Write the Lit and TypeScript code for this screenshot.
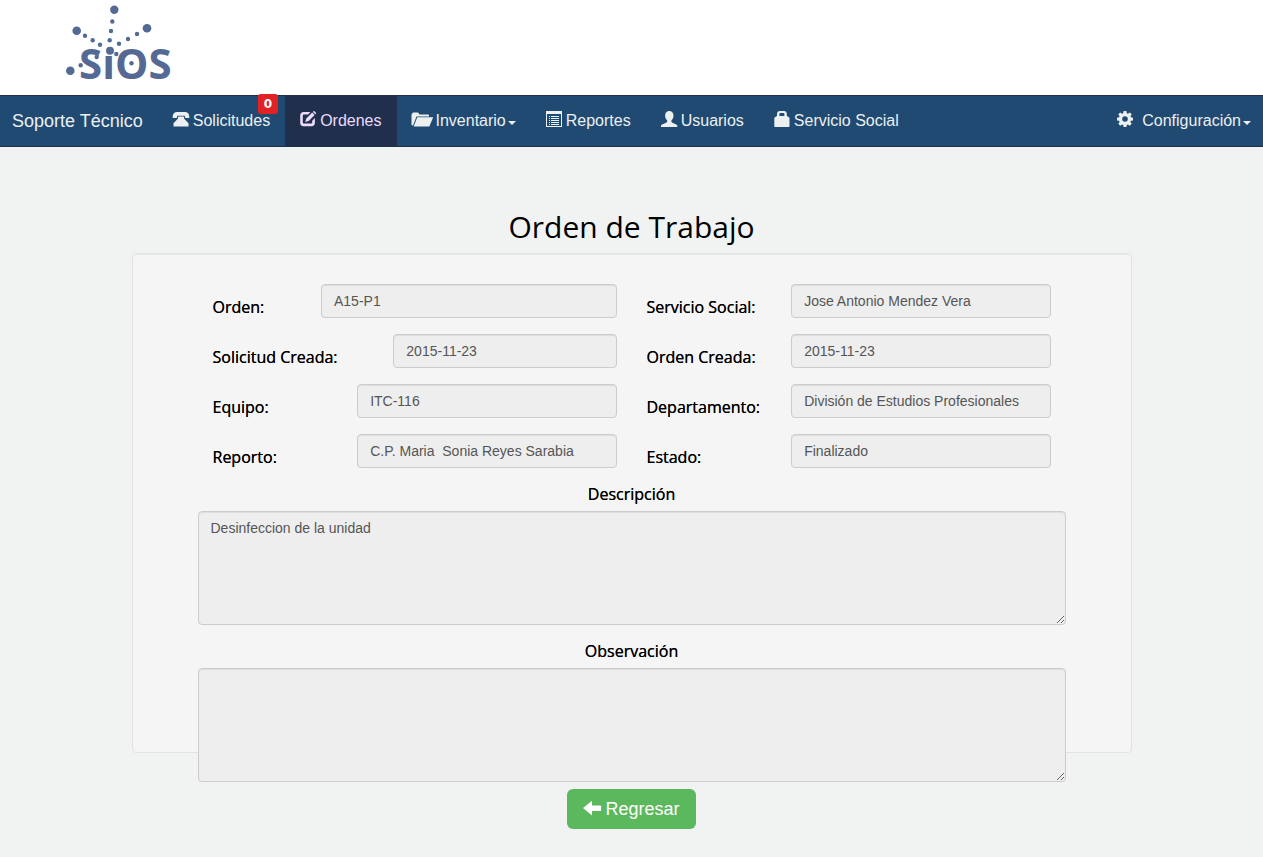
import { LitElement, html, svg, css, nothing } from "lit";
import { customElement, state } from "lit/decorators.js";

const icons: Record<string, { w: number; body: unknown }> = {
  phone: {
    w: 16,
    body: svg`<path d="M4 1h8c2.500 0 4.300 2 4.300 4.300V7h-4.100L11.700 4.700H4.300L3.800 7H-.3V5.300C-.3 3 1.500 1 4 1z"/><path d="M5.300 5.600h5.400l.5 2.200 4.300 4.400V15.500H.5V12.200l4.300-4.400z"/>`,
  },
  edit: {
    w: 16,
    body: svg`<path fill-rule="evenodd" d="M3.600 1H10.500L8 3.600H4c-.700 0-1.200.500-1.200 1.200v6.600c0 .700.500 1.200 1.200 1.200h7c.700 0 1.200-.500 1.200-1.200V9.700l2.700-2.700v5c0 1.900-1.300 3.200-3.200 3.200H3.400C1.500 15.200.2 13.900.2 12V4.200C.2 2.300 1.600 1 3.600 1z"/><path d="M12.200 1.600 14.600 4 8.700 9.900 5.200 11.100 6.300 7.500z"/><path d="M12.900.9l.6-.6c.3-.3.6-.3.900 0l1.500 1.500c.3.300.3.600 0 .900l-.6.600z"/>`,
  },
  folder: {
    w: 20,
    body: svg`<path d="M-.5 14V3.500L1 1.500h5L7.500 3.500H16c.600 0 1 .400 1 1V5.500H4.500L1 14.500z"/><path d="M5.300 6.300H21.200L17.300 15.500H1.600z"/>`,
  },
  list: {
    w: 16,
    body: svg`<path fill-rule="evenodd" d="M0 0h16v16H0zM1 3v12h14V3z"/><path d="M3 5h1v1H3zM5 5h8v1H5zM3 7h1v1H3zM5 7h8v1H5zM3 9h1v1H3zM5 9h8v1H5zM3 11h1v1H3zM5 11h8v1H5zM3 13h1v1H3zM5 13h8v1H5z"/>`,
  },
  user: {
    w: 16,
    body: svg`<path d="M8.300 0c2.400 0 4.200 1.700 4.200 4.400 0 2-.900 4-2.100 5v1.200c.100.600.400.800 1 1.100l3.800 1.700c.700.300 1.100.700 1.100 1.400V16H0v-1.200c0-.700.400-1.100 1.100-1.400l4-1.700c.600-.3 1-.5 1.100-1.100V9.400c-1.200-1-2.100-3-2.100-5C4.100 1.700 5.900 0 8.300 0z"/>`,
  },
  lock: {
    w: 16,
    body: svg`<path fill-rule="evenodd" d="M6 0h4c1.700 0 2.800 1.300 2.800 2.900V5l2.200 1.300c.3.200.5.500.5.900V15c0 .600-.4 1-1 1H1.300c-.6 0-1-.4-1-1V7.200c0-.4.200-.7.500-.9L3 5V2.900C3 1.300 4.300 0 6 0zM6.200 2.100c-.5 0-.8.300-.8.800V5h5V2.900c0-.5-.3-.8-.8-.8z"/>`,
  },
  cog: {
    w: 16,
    body: svg`<path fill-rule="evenodd" d="M6.600 0h2.800l.4 2.200 1.100.5L12.800 1.400l1.900 1.900-1.200 1.900.4 1.100 2.100.4v2.700l-2.100.4-.5 1.100 1.300 1.900-1.900 1.900-1.900-1.300-1.100.5L9.400 16H6.600l-.4-2.100-1.100-.5-1.900 1.300-1.900-1.900 1.300-1.900-.5-1.100L0 9.400V6.700l2.100-.4.5-1.100L1.300 3.300l1.900-1.900L5.100 2.700l1.100-.5zM8 5.200a2.800 2.800 0 1 0 0 5.600 2.800 2.800 0 0 0 0-5.600z"/>`,
  },
  back: {
    w: 18,
    body: svg`<path d="M0 7l9-7.200v4.700H17.600c.3 0 .5.200.5.500v4.500c0 .3-.2.500-.5.500H9v4.500z"/>`,
  },
};

const icon = (name: string) => {
  const { w, body } = icons[name];
  return html`<svg class="icon" width=${w} height="16" viewBox="0 0 ${w} 16" aria-hidden="true">${body}</svg>`;
};

const logoDots = [
  [114.3, 9.8, 4.2], [112.3, 21.5, 2.2], [111, 31, 2.2], [109.7, 40.3, 2.2], [110, 50.7, 4],
  [76.7, 30.7, 4.3], [85, 35.7, 2.2], [92.7, 40.3, 2.2], [100, 44.7, 2.2],
  [147, 28.3, 4.3], [137, 34, 2.2], [128, 39, 2.2], [119, 43.7, 2.2], [116.3, 54, 2.2],
  [96.7, 57, 2.2], [80.7, 65.3, 2.2], [70.3, 70.7, 4.3], [131.5, 63.3, 2.2],
];

interface NavItem {
  label: string;
  icon: string;
  badge?: string;
  menu?: boolean;
}

interface Field {
  id: string;
  label: string;
  value: string;
  size: "narrow" | "medium" | "wide";
}

@customElement("app-nav")
export class AppNav extends LitElement {
  @state() private active = "Ordenes";

  private items: NavItem[] = [
    { label: "Solicitudes", icon: "phone", badge: "0" },
    { label: "Ordenes", icon: "edit" },
    { label: "Inventario", icon: "folder", menu: true },
    { label: "Reportes", icon: "list" },
    { label: "Usuarios", icon: "user" },
    { label: "Servicio Social", icon: "lock" },
  ];

  static styles = css`
    :host {
      display: block;
      font: 16px/20px "Liberation Sans", Arial, sans-serif;
    }
    .bar {
      display: flex;
      align-items: stretch;
      background: #204a71;
      border-top: 1px solid #202f4c;
      border-bottom: 1px solid #202f4c;
      padding-left: 12px;
    }
    .brand {
      padding: 15px 15px 15px 0;
      font-size: 18px;
    }
    .items {
      display: flex;
      flex: 1;
      margin: 0;
      padding: 0;
      list-style: none;
    }
    a {
      color: #ecf0f1;
      text-decoration: none;
      white-space: nowrap;
    }
    .link {
      position: relative;
      display: flex;
      align-items: flex-start;
      gap: 4px;
      padding: 15px;
    }
    .active {
      background: #202f4c;
      color: #ecdbff;
    }
    .settings {
      gap: 9px;
      padding-right: 12px;
    }
    .icon {
      fill: currentColor;
      overflow: visible;
    }
    .text {
      display: flex;
      align-items: center;
      gap: 2px;
    }
    .caret {
      margin-top: 4px;
      border: 4px solid transparent;
      border-top-color: currentColor;
      border-bottom: 0;
    }
    .badge {
      position: absolute;
      top: -2px;
      right: 7px;
      padding: 0 6px;
      border-radius: 3px;
      background: #e02222;
      color: #fff;
      font: bold 12px/20px "DejaVu Sans", sans-serif;
    }
  `;

  render() {
    return html`<nav class="bar">
      <a class="brand" href="#">Soporte Técnico</a>
      <ul class="items">
        ${this.items.map(
          (item) => html`<li>
            <a
              class="link ${item.label === this.active ? "active" : ""}"
              href="#"
              @click=${() => (this.active = item.label)}
              >${icon(item.icon)}<span class="text"
                >${item.label}${item.menu ? html`<span class="caret"></span>` : nothing}</span
              >${item.badge ? html`<span class="badge">${item.badge}</span>` : nothing}</a
            >
          </li>`
        )}
      </ul>
      <a class="link settings" href="#"
        >${icon("cog")}<span class="text">Configuración<span class="caret"></span></span
      ></a>
    </nav>`;
  }
}

@customElement("app-root")
export class AppRoot extends LitElement {
  private fields: Field[] = [
    { id: "orden", label: "Orden:", value: "A15-P1", size: "wide" },
    { id: "servicio", label: "Servicio Social:", value: "Jose Antonio Mendez Vera", size: "medium" },
    { id: "solicitud", label: "Solicitud Creada:", value: "2015-11-23", size: "narrow" },
    { id: "creada", label: "Orden Creada:", value: "2015-11-23", size: "medium" },
    { id: "equipo", label: "Equipo:", value: "ITC-116", size: "medium" },
    { id: "departamento", label: "Departamento:", value: "División de Estudios Profesionales", size: "medium" },
    { id: "reporto", label: "Reporto:", value: "C.P. Maria  Sonia Reyes Sarabia", size: "medium" },
    { id: "estado", label: "Estado:", value: "Finalizado", size: "medium" },
  ];

  static styles = css`
    :host {
      display: block;
      min-height: 100vh;
      background: #f0f3f2;
      color: #000;
      font: 14px/20px "Liberation Sans", Arial, sans-serif;
    }
    * {
      box-sizing: border-box;
    }
    .header {
      height: 95px;
      padding-left: 60px;
      background: #fff;
    }
    .logo {
      display: block;
      fill: #546a94;
    }
    .logo-text {
      font: 700 42px "Open Sans", sans-serif;
    }
    .main {
      max-width: 1000px;
      margin: 0 auto;
      padding-top: 60px;
    }
    .title {
      margin: 0;
      font: 400 30px/40px "Open Sans", sans-serif;
      text-align: center;
    }
    .well {
      margin-top: 6px;
      padding: 30px 65px 0;
      border: 1px solid #e3e3e3;
      border-radius: 4px;
      background: #f5f5f5;
      box-shadow: inset 0 1px 1px rgba(0, 0, 0, 0.05);
    }
    .fields {
      display: grid;
      grid-template-columns: 1fr 1fr;
      row-gap: 16px;
    }
    .field {
      display: grid;
    }
    .field.wide {
      grid-template-columns: 3fr 9fr;
    }
    .field.medium {
      grid-template-columns: 4fr 8fr;
    }
    .field.narrow {
      grid-template-columns: 5fr 7fr;
    }
    .label,
    .area-label {
      font: 500 16px/22px "Open Sans", sans-serif;
      text-shadow: 0 0 #000;
      white-space: nowrap;
    }
    .label {
      padding: 12px 0 0 15px;
    }
    .control {
      display: block;
      width: 100%;
      min-width: 0;
      margin: 0;
      padding: 6px 12px;
      border: 1px solid #ccc;
      border-radius: 4px;
      background: #eee;
      color: #555;
      font: 14px/20px "Liberation Sans", Arial, sans-serif;
      box-shadow: inset 0 1px 1px rgba(0, 0, 0, 0.075);
    }
    .slot {
      padding: 0 15px;
    }
    .input {
      height: 34px;
    }
    .area-label {
      display: block;
      padding: 15px 0 6px;
      text-align: center;
    }
    .spill {
      display: flex;
      justify-content: center;
      margin-bottom: -77px;
      padding-top: 7px;
    }
    .button {
      display: flex;
      align-items: center;
      gap: 4px;
      height: 40px;
      padding: 0 16px;
      border: 0;
      border-radius: 6px;
      background: #5cb85c;
      color: #fff;
      font: 18px/24px "Liberation Sans", Arial, sans-serif;
    }
    .icon {
      fill: currentColor;
      overflow: visible;
    }
  `;

  render() {
    return html`
      <header class="header">
        <svg class="logo" width="120" height="90" viewBox="60 0 120 90" role="img" aria-label="SIOS">
          ${logoDots.map(([x, y, r]) => svg`<circle cx=${x} cy=${y} r=${r}></circle>`)}
          <text class="logo-text" x="79" y="79">SıOS</text>
        </svg>
      </header>
      <app-nav></app-nav>
      <main class="main">
        <h1 class="title">Orden de Trabajo</h1>
        <form class="well" @submit=${(e: Event) => e.preventDefault()}>
          <div class="fields">
            ${this.fields.map(
              (f) => html`<div class="field ${f.size}">
                <label class="label" for=${f.id}>${f.label}</label>
                <div class="slot"><input class="control input" id=${f.id} type="text" readonly .value=${f.value} /></div>
              </div>`
            )}
          </div>
          <label class="area-label" for="descripcion">Descripción</label>
          <textarea class="control" id="descripcion" rows="5" readonly .value=${"Desinfeccion de la unidad"}></textarea>
          <label class="area-label" for="observacion">Observación</label>
          <textarea class="control" id="observacion" rows="5" readonly></textarea>
          <div class="spill">
            <button class="button" type="button">${icon("back")}<span>Regresar</span></button>
          </div>
        </form>
      </main>
    `;
  }
}
